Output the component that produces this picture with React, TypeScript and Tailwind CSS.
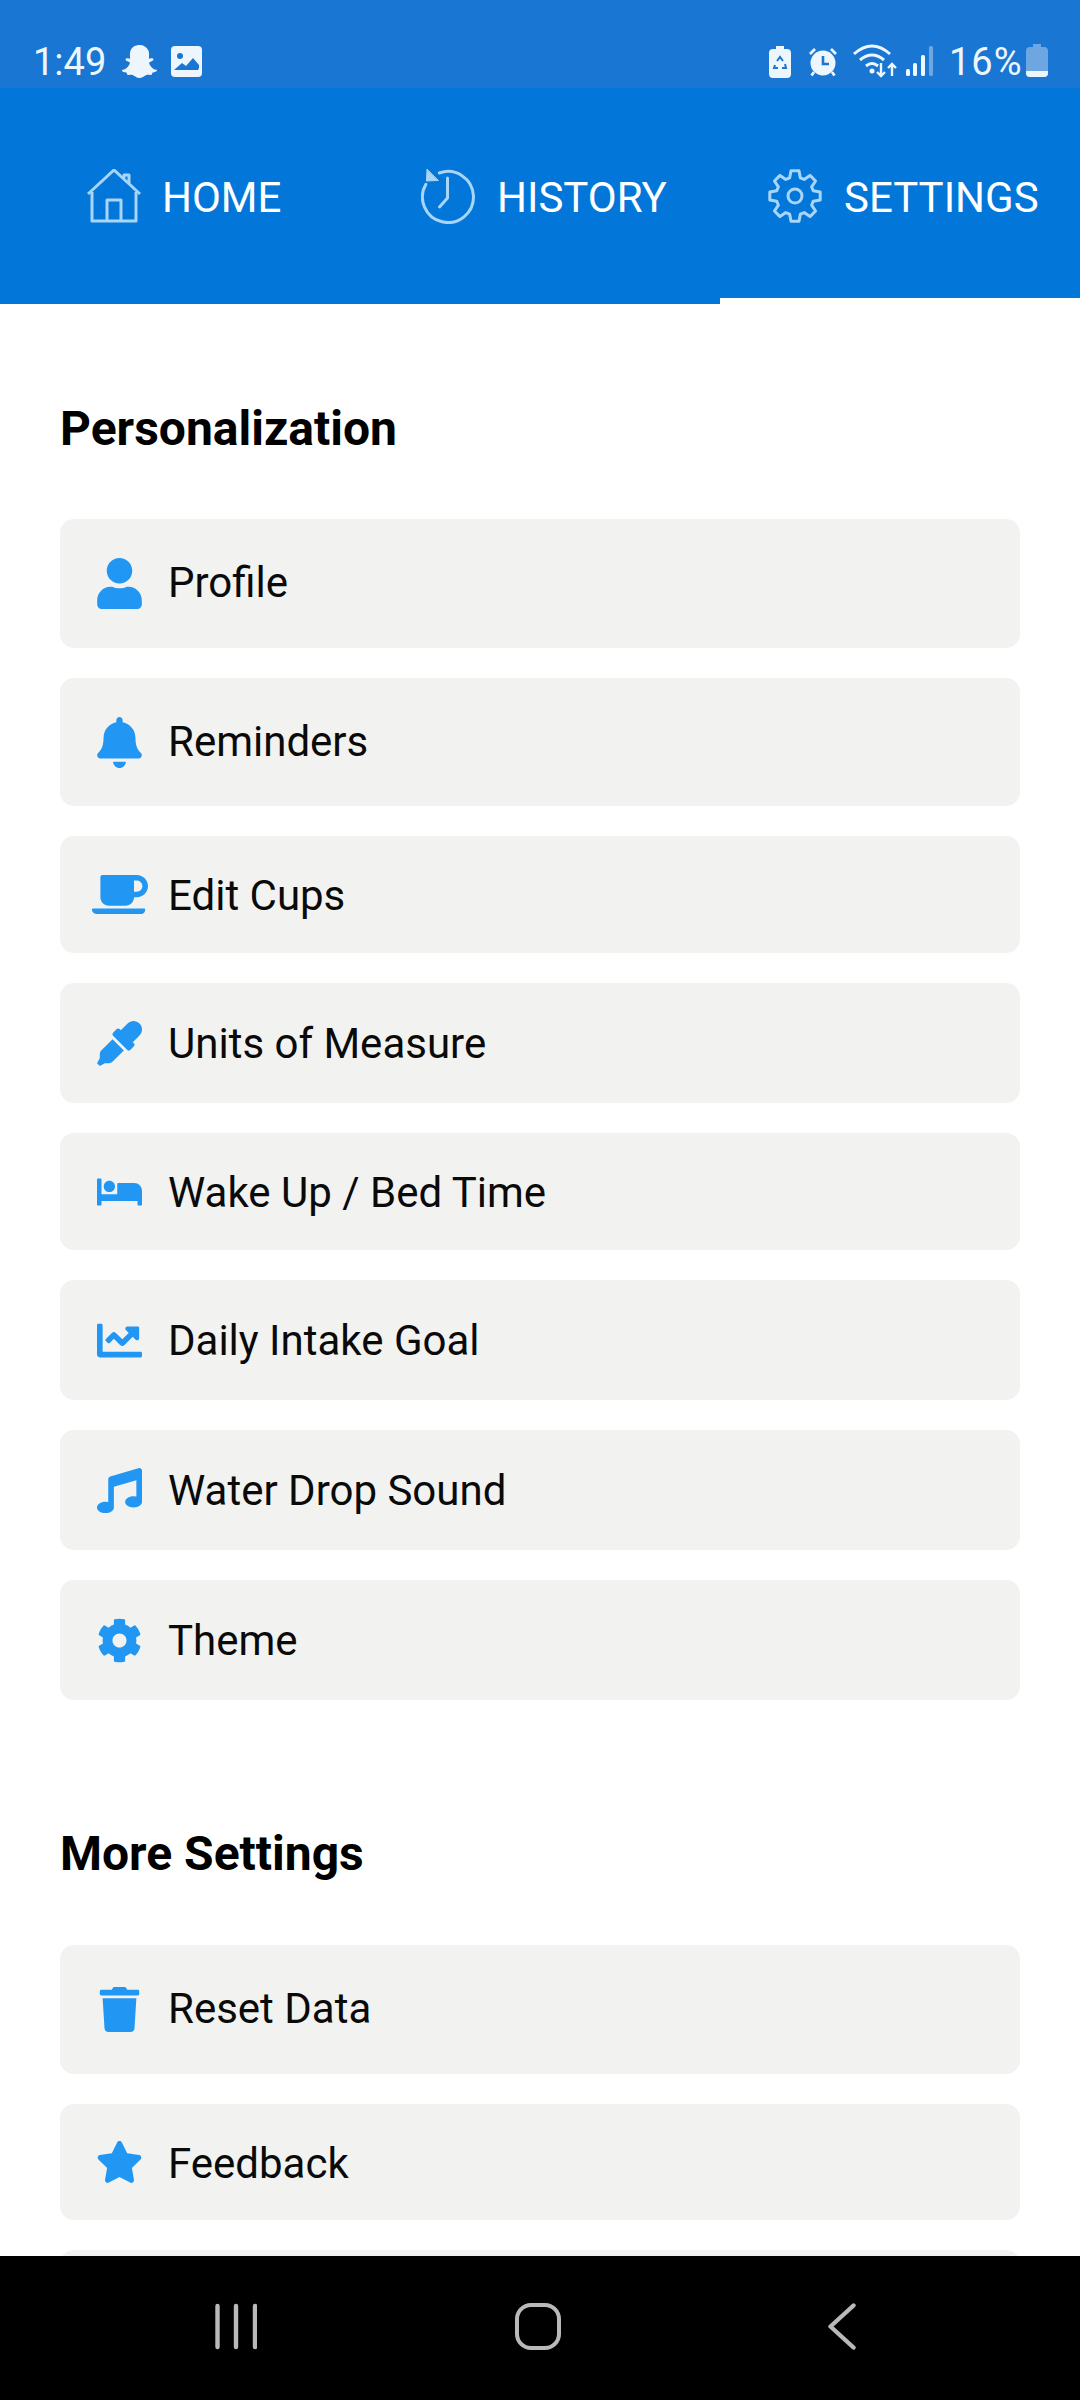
import React from 'react';
import {
  FaUser,
  FaBell,
  FaCoffee,
  FaEyeDropper,
  FaBed,
  FaChartLine,
  FaMusic,
  FaCog,
  FaTrash,
  FaStar,
  FaSnapchatGhost,
} from 'react-icons/fa';

const gearPath = () => {
  const teeth = 8;
  const cx = 27;
  const cy = 27;
  const pts: string[] = [];
  for (let i = 0; i < teeth; i++) {
    const a = (i / teeth) * Math.PI * 2 - Math.PI / 2;
    const step = (Math.PI * 2) / teeth;
    const list: [number, number][] = [
      [19, a - step * 0.36],
      [25.5, a - step * 0.2],
      [25.5, a + step * 0.2],
      [19, a + step * 0.36],
    ];
    list.forEach(([r, t]) => {
      pts.push(`${(cx + r * Math.cos(t)).toFixed(1)} ${(cy + r * Math.sin(t)).toFixed(1)}`);
    });
  }
  return `M${pts.join('L')}Z`;
};

const HomeIcon = () => (
  <svg width="54" height="54" viewBox="0 0 54 54" fill="none" stroke="#a8d5f8" strokeWidth="3" strokeLinejoin="round" className="shrink-0">
    <path d="M1 25 27 1l26 24" />
    <path d="M37 9V6h5v8" />
    <path d="M5 23v29h44V23" />
    <path d="M20 52V31h14v21" />
  </svg>
);

const HistoryIcon = () => (
  <svg width="54" height="56" viewBox="0 0 54 56" fill="none" stroke="#a8d5f8" strokeWidth="3" strokeLinecap="round" strokeLinejoin="round" className="shrink-0">
    <path d="M18.3 5A25.5 25.5 0 1 1 4.9 16.2" />
    <path d="M6 1.5 5.5 13 17 12.5Z" fill="#a8d5f8" strokeWidth="1" />
    <path d="M26.5 10v20l-8 9" />
  </svg>
);

const GearIcon = () => (
  <svg width="54" height="54" viewBox="0 0 54 54" fill="none" stroke="#a8d5f8" strokeWidth="3" strokeLinejoin="round" className="shrink-0">
    <path d={gearPath()} />
    <circle cx="27" cy="27" r="7" />
  </svg>
);

const StatusBar = () => (
  <div className="h-[88px] bg-[#1976d2] flex items-start pt-[44px] pl-[33px] pr-[32px] text-[#eef6fd]">
    <span className="text-[38px] leading-[36px] w-[88px]">1:49</span>
    <FaSnapchatGhost className="w-[37px] h-[35px] shrink-0" />
    <svg width="31" height="31" viewBox="0 0 31 31" className="ml-[13px] mt-[2px] shrink-0">
      <rect width="31" height="31" rx="4" fill="#eef6fd" />
      <circle cx="9" cy="10" r="3" fill="#1976d2" />
      <path d="M3 24 11 17l4 3 7-8 6 7v3l-1 2H5Z" fill="#1976d2" />
    </svg>
    <div className="flex-1" />
    <svg width="22" height="32" viewBox="0 0 22 32" className="mt-[2px] shrink-0">
      <path d="M7 0h8v3h3q4 0 4 4v21q0 4-4 4H4q-4 0-4-4V7q0-4 4-4h3Z" fill="#eef6fd" />
      <path d="M8 15l3-4 3 4M6 19l-1 3h4M16 18l1 4h-4" fill="none" stroke="#1976d2" strokeWidth="2" />
    </svg>
    <svg width="30" height="30" viewBox="0 0 30 30" className="ml-[17px] mt-[3px] shrink-0">
      <circle cx="15" cy="16" r="12.5" fill="#eef6fd" />
      <path d="M15 9v8h6" fill="none" stroke="#1976d2" strokeWidth="2.6" />
      <path d="M2 7 7 2M23 2l5 5M6 25l-2.5 3.5M24 25l2.5 3.5" stroke="#eef6fd" strokeWidth="2.8" />
    </svg>
    <svg width="44" height="34" viewBox="0 0 44 34" fill="none" className="ml-[15px] shrink-0">
      <path d="M1 10Q19-6 37 10M7 16Q19 6 31 16M13 22Q19 17 25 22" stroke="#eef6fd" strokeWidth="3" />
      <circle cx="19" cy="27" r="2.5" fill="#eef6fd" />
      <path d="M28 19v13M24 28l4 4 4-4M39 32V20M35 24l4-4 4 4" stroke="#eef6fd" strokeWidth="2.4" />
    </svg>
    <svg width="27" height="30" viewBox="0 0 27 30" className="ml-[9px] mt-[2px] shrink-0">
      <rect x="0" y="23" width="4" height="7" rx="1.5" fill="#eef6fd" />
      <rect x="7" y="17" width="4" height="13" rx="1.5" fill="#eef6fd" />
      <rect x="15" y="9" width="4" height="21" rx="1.5" fill="#eef6fd" />
      <rect x="23" y="0" width="4" height="30" rx="1.5" fill="#6ea6e2" />
    </svg>
    <span className="text-[38px] leading-[36px] ml-[16px] tracking-[1px] w-[71px]">16%</span>
    <svg width="22" height="33" viewBox="0 0 22 33" className="ml-[6px] shrink-0">
      <path d="M7 0h8v3h3q4 0 4 4v22q0 4-4 4H4q-4 0-4-4V7q0-4 4-4h3Z" fill="#6ea6e2" />
      <path d="M0 27h22v2q0 4-4 4H4q-4 0-4-4Z" fill="#eef6fd" />
    </svg>
  </div>
);

const TabBar = () => (
  <div className="h-[216px] bg-[#0277d9] flex text-white text-[42px]">
    <div className="w-[360px] flex items-center pl-[87px]">
      <HomeIcon />
      <span className="ml-[21px] pt-[2px]">HOME</span>
    </div>
    <div className="w-[360px] flex items-center pl-[61px]">
      <HistoryIcon />
      <span className="ml-[22px] pt-[2px]">HISTORY</span>
    </div>
    <div className="w-[360px] flex items-center pl-[48px] pt-[6px] border-b-[6px] border-white">
      <GearIcon />
      <span className="ml-[22px] pt-[2px]">SETTINGS</span>
    </div>
  </div>
);

type Item = { label: string; icon: React.ReactNode; height: string; text?: string };

const personalization: Item[] = [
  { label: 'Profile', height: 'h-[129px]', text: 'pb-[2px]', icon: <FaUser className="w-[45px] h-[51px] shrink-0" /> },
  { label: 'Reminders', height: 'h-[128px]', text: 'pb-[2px]', icon: <FaBell className="w-[45px] h-[51px] shrink-0" /> },
  { label: 'Edit Cups', height: 'h-[117px]', text: 'pt-[2px]', icon: <FaCoffee className="w-[56px] h-[45px] shrink-0" /> },
  { label: 'Units of Measure', height: 'h-[120px]', icon: <FaEyeDropper className="w-[45px] h-[45px] shrink-0" /> },
  { label: 'Wake Up / Bed Time', height: 'h-[117px]', text: 'pt-[2px]', icon: <FaBed className="w-[45px] h-[36px] shrink-0" /> },
  { label: 'Daily Intake Goal', height: 'h-[120px]', icon: <FaChartLine className="w-[45px] h-[45px] shrink-0" /> },
  { label: 'Water Drop Sound', height: 'h-[120px]', icon: <FaMusic className="w-[45px] h-[45px] shrink-0" /> },
  { label: 'Theme', height: 'h-[120px]', icon: <FaCog className="w-[45px] h-[45px] shrink-0" /> },
];

const moreSettings: Item[] = [
  { label: 'Reset Data', height: 'h-[129px]', text: 'pb-[2px]', icon: <FaTrash className="w-[45px] h-[45px] shrink-0" /> },
  { label: 'Feedback', height: 'h-[116px]', text: 'pt-[2px]', icon: <FaStar className="w-[47px] h-[42px] shrink-0" /> },
  { label: '', height: 'h-[116px]', icon: null },
];

const Row = ({ item }: { item: Item }) => (
  <div className={`${item.height} shrink-0 bg-[#f2f2f0] rounded-[14px] flex items-center pl-[37px]`}>
    <div className="w-[45px] flex justify-center text-[#2196f3]">{item.icon}</div>
    <span className={`ml-[26px] text-[42px] text-[#0a0a0a] ${item.text ?? ''}`}>{item.label}</span>
  </div>
);

export default function App() {
  return (
    <div className="w-[1080px] h-[2400px] bg-white flex flex-col overflow-hidden font-['Roboto',sans-serif]">
      <StatusBar />
      <TabBar />
      <div className="flex-1 overflow-hidden px-[60px]">
        <h2 className="pt-[93px] h-[157px] mb-[58px] text-[48px] leading-[64px] font-bold text-black">Personalization</h2>
        <div className="flex flex-col gap-[30px]">
          {personalization.map((item) => (
            <Row key={item.label} item={item} />
          ))}
        </div>
        <h2 className="pt-[122px] h-[184px] mb-[61px] text-[48px] leading-[64px] font-bold text-black">More Settings</h2>
        <div className="flex flex-col gap-[30px]">
          {moreSettings.map((item) => (
            <Row key={item.label || 'next'} item={item} />
          ))}
        </div>
      </div>
      <div className="h-[144px] bg-black flex items-start pt-[47px] pl-[215px]">
        <svg width="42" height="47" viewBox="0 0 42 47" className="shrink-0" fill="none" stroke="#b9b9b9" strokeWidth="4.4" strokeLinecap="round">
          <path d="M2.5 3v41M21 3v41M40 3v41" />
        </svg>
        <div className="ml-[258px] w-[46px] h-[47px] rounded-[16px] border-[4px] border-[#b9b9b9] shrink-0" />
        <svg width="28" height="47" viewBox="0 0 28 47" className="ml-[267px] shrink-0" fill="none" stroke="#b9b9b9" strokeWidth="4.4" strokeLinecap="round" strokeLinejoin="round">
          <path d="M25.5 2.5 2.5 23.5l23 21" />
        </svg>
      </div>
    </div>
  );
}
